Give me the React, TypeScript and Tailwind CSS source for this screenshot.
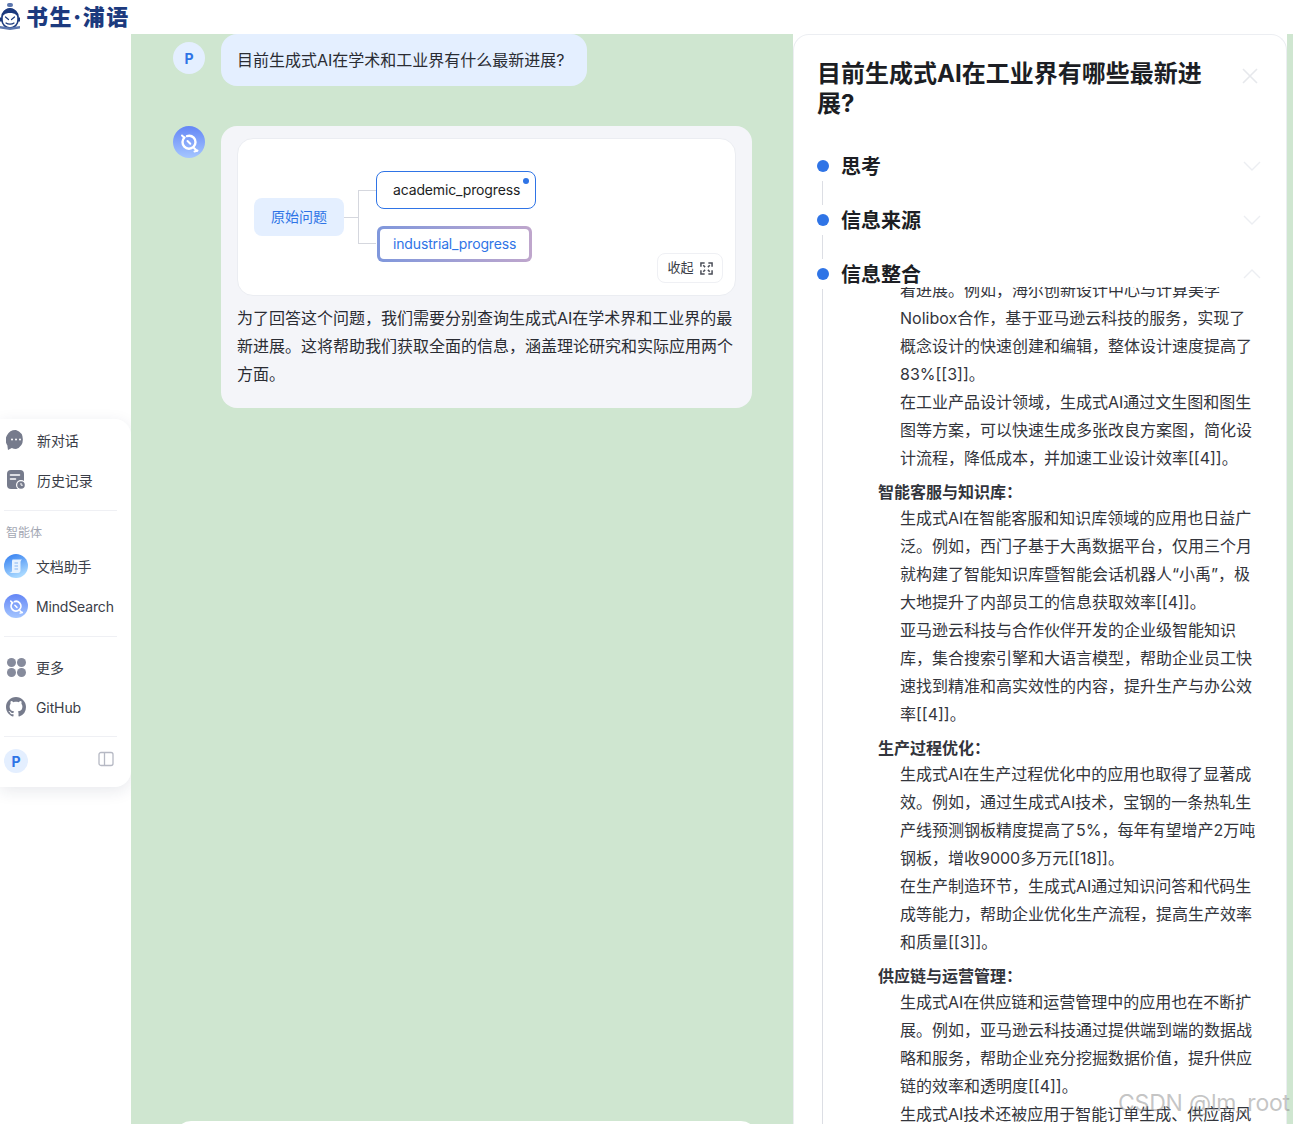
import React from "react";

const font = { fontFamily: '"Inter","Noto Sans CJK SC",sans-serif' };

function Mascot() {
  return (
    <svg width="22" height="30" viewBox="0 0 22 30" fill="none">
      <rect x="8" y="1" width="6" height="4" rx="2" fill="#5c76ae" />
      <path d="M3 15a8 8 0 0 1 16 0v3a8 8 0 0 1-16 0z" fill="#fff" stroke="#1c3a7e" strokeWidth="1.600" />
      <path d="M2.500 15C4 9 7 6 11 6s7 3 8.500 9c-2-1.500-3-4-8.500-4s-6.500 2.500-8.500 4z" fill="#1c3a7e" />
      <path d="M6.500 15l3 2.500M15.500 15l-3 2.500M7 21c2 1.500 6 1.500 8 0" stroke="#1c3a7e" strokeWidth="1.200" strokeLinecap="round" />
      <path d="M1 15.500h2v4H1zM19 15.500h2v4h-2z" fill="#1c3a7e" />
      <path d="M1 24l10 1.500L21 24v2.500l-10 1.500L1 26.500z" fill="#5c76ae" />
    </svg>
  );
}

function MindIcon({ size = 32, id }: { size?: number; id: string }) {
  return (
    <svg width={size} height={size} viewBox="0 0 32 32" fill="none">
      <defs>
        <linearGradient id={id} x1="0" y1="0" x2="0" y2="1">
          <stop offset="0" stopColor="#6486f6" />
          <stop offset="1" stopColor="#a5c6ff" />
        </linearGradient>
      </defs>
      <circle cx="16" cy="16" r="16" fill={`url(#${id})`} />
      <path d="M11.500 11.500a6.500 6.500 0 1 0 9.200 0.200 6.500 6.500 0 0 0-6.700-1.600" stroke="#fff" strokeWidth="2.400" strokeLinecap="round" />
      <path d="M9 9.500l2 2M14.500 15l2.800 2.800M21 22l3 3M21.500 25.500l3-1" stroke="#fff" strokeWidth="2" strokeLinecap="round" />
    </svg>
  );
}

function DocIcon() {
  return (
    <svg width="24" height="24" viewBox="0 0 24 24" fill="none">
      <defs>
        <linearGradient id="docg" x1="0" y1="0" x2="0.4" y2="1">
          <stop offset="0" stopColor="#2f7bf0" />
          <stop offset="1" stopColor="#a8d8ff" />
        </linearGradient>
      </defs>
      <circle cx="12" cy="12" r="12" fill="url(#docg)" />
      <path d="M8.500 5.500H18c-1 .5-1.500 1.500-1.500 3v8c0 1.500-1 2.500-2.500 2.500H5.500c1.500-.5 2.500-1 2.500-2.500V7z" fill="#e6f2ff" />
      <path d="M10.500 9h3.500M10.500 12h3.500M10.500 15h3.500" stroke="#86b6f2" strokeWidth="1" />
    </svg>
  );
}

function ChatIcon() {
  return (
    <svg width="20" height="20" viewBox="0 0 20 20">
      <path d="M10 0a10 10 0 0 1 0 19c-1.500 0-3-.3-4.200-.9L2 20c-.3-1.800-.5-3.300-.6-4.500A10 10 0 0 1 10 0z" fill="#767b8c" />
      <circle cx="6" cy="9.500" r="1" fill="#fff" />
      <circle cx="10" cy="9.500" r="1" fill="#fff" />
      <circle cx="14" cy="9.500" r="1" fill="#fff" />
    </svg>
  );
}

function HistoryIcon() {
  return (
    <svg width="20" height="20" viewBox="0 0 20 20">
      <rect x="1" y="0" width="17" height="19" rx="4" fill="#767b8c" />
      <path d="M4.500 5h9M4.500 9h5" stroke="#fff" strokeWidth="1.600" strokeLinecap="round" />
      <circle cx="15" cy="15" r="5" fill="#fff" />
      <circle cx="15" cy="15" r="3.800" fill="#767b8c" />
      <path d="M15 13v2.200h1.800" stroke="#fff" strokeWidth="1" fill="none" />
    </svg>
  );
}

function GridIcon() {
  return (
    <div className="grid grid-cols-2 gap-[1px] w-[19px]">
      <div className="w-[9px] h-[9px] rounded-full bg-[#868b9c]" />
      <div className="w-[9px] h-[9px] rounded-full bg-[#868b9c]" />
      <div className="w-[9px] h-[9px] rounded-full bg-[#868b9c]" />
      <div className="w-[9px] h-[9px] rounded-full bg-[#868b9c]" />
    </div>
  );
}

function GithubIcon() {
  return (
    <svg width="20" height="20" viewBox="0 0 16 16" fill="#767b8c">
      <path d="M8 0C3.580 0 0 3.580 0 8c0 3.540 2.290 6.530 5.470 7.590.4.070.55-.17.55-.38 0-.19-.01-.82-.01-1.490-2.010.37-2.530-.49-2.690-.94-.09-.23-.48-.94-.82-1.130-.28-.15-.68-.52-.01-.53.63-.01 1.080.58 1.230.82.72 1.210 1.870.87 2.330.66.070-.52.280-.87.510-1.070-1.780-.2-3.640-.89-3.640-3.950 0-.87.310-1.590.820-2.150-.080-.2-.360-1.020.080-2.120 0 0 .670-.210 2.200.820.640-.18 1.320-.270 2-.270s1.360.090 2 .270c1.530-1.040 2.200-.820 2.200-.820.440 1.100.160 1.920.080 2.120.510.560.820 1.270.820 2.150 0 3.070-1.870 3.750-3.650 3.950.290.250.540.730.540 1.480 0 1.070-.010 1.930-.010 2.200 0 .210.150.460.550.380A8.013 8.013 0 0 0 16 8c0-4.420-3.580-8-8-8z" />
    </svg>
  );
}

function SideRow({ icon, label, wide }: { icon: React.ReactNode; label: string; wide?: boolean }) {
  return (
    <div className="flex items-center h-[40px] pl-[6px]">
      <div className="w-[20px] flex justify-center">{icon}</div>
      <span className={wide ? "ml-[11px] text-[14px] tracking-[-0.1px] text-[#3a3d47]" : "ml-[10px] text-[14px] tracking-[-0.1px] text-[#3a3d47]"}>{label}</span>
    </div>
  );
}

function AgentRow({ icon, label }: { icon: React.ReactNode; label: string }) {
  return (
    <div className="flex items-center h-[40px] pl-[4px]">
      <div className="w-[24px] flex justify-center">{icon}</div>
      <span className="ml-[8px] text-[14px] tracking-[-0.15px] text-[#3a3d47]">{label}</span>
    </div>
  );
}

function Divider() {
  return <div className="mx-[4px] w-[113px] h-px bg-[#eff0f4]" />;
}

function Sidebar() {
  return (
    <div className="mt-[385px] w-[131px] h-[368px] bg-white rounded-r-[16px] shadow-[0_4px_16px_rgba(30,40,80,0.10)] pt-[1px]">
      <SideRow icon={<ChatIcon />} label="新对话" wide />
      <SideRow icon={<HistoryIcon />} label="历史记录" wide />
      <div className="h-[10px]" />
      <Divider />
      <div className="h-[21px] mt-[11px] pl-[6px] text-[12px] leading-[21px] text-[#a3a7b3]">智能体</div>
      <div className="h-[3px]" />
      <AgentRow icon={<DocIcon />} label="文档助手" />
      <AgentRow icon={<MindIcon size={24} id="mi2" />} label="MindSearch" />
      <div className="h-[10px]" />
      <Divider />
      <div className="h-[10px]" />
      <SideRow icon={<GridIcon />} label="更多" />
      <SideRow icon={<GithubIcon />} label="GitHub" />
      <div className="h-[9px]" />
      <Divider />
      <div className="flex items-center justify-between pl-[4px] pr-[17px] mt-[12px]">
        <div className="w-[24px] h-[24px] rounded-full bg-[#e4efff] flex items-center justify-center text-[14px] font-bold text-[#2f74e6]">P</div>
        <svg className="-mt-[4px]" width="16" height="16" viewBox="0 0 16 16" fill="none" stroke="#b6b9c4" strokeWidth="1.300">
          <rect x="1" y="1.500" width="14" height="13" rx="2" />
          <path d="M6.500 1.500v13" />
        </svg>
      </div>
    </div>
  );
}

function Graph() {
  return (
    <div className="h-[158px] rounded-[16px] bg-white border border-[#ebedf2] flex items-center pl-[16px] relative">
      <div className="w-[90px] h-[38px] pb-[2px] rounded-[8px] bg-[#e4efff] text-[14px] text-[#2f74e6] flex items-center justify-center">原始问题</div>
      <div className="w-[14px] h-px bg-[#d5d7de]" />
      <div className="w-[18px] h-[54px] border border-r-0 border-[#d5d7de]" />
      <div className="flex flex-col gap-[17px] -mt-[1px]">
        <div className="relative w-[160px] h-[38px] pb-[2px] rounded-[8px] bg-white border border-[#2f74e6] text-[14px] tracking-[-0.15px] text-[#1c1e24] flex items-center pl-[16px] whitespace-nowrap">
          academic_progress
          <div className="absolute top-[6px] right-[6px] w-[6px] h-[6px] rounded-full bg-[#2f74e6]" />
        </div>
        <div className="ml-[1px] w-[155px] h-[36px] rounded-[6px] p-[3px] bg-gradient-to-r from-[#7f97dc] to-[#bfa6cc]">
          <div className="w-full h-full pb-[2px] rounded-[4px] bg-white text-[14px] tracking-[-0.15px] text-[#2f74e6] flex items-center pl-[13px] whitespace-nowrap">industrial_progress</div>
        </div>
      </div>
      <div className="absolute right-[12px] bottom-[12px] w-[66px] h-[30px] rounded-[8px] bg-white border border-[#eff0f4] flex items-center justify-center gap-[6px] text-[13px] text-[#3a3d47]">
        收起
        <svg width="13" height="13" viewBox="0 0 14 14" fill="none" stroke="#4a4d57" strokeWidth="1.600">
          <path d="M1 5V1h4M9 1h4v4M13 9v4H9M5 13H1V9" />
          <path d="M3.500 3.500l2 2M10.500 3.500l-2 2M10.500 10.500l-2-2M3.500 10.500l2-2" />
        </svg>
      </div>
    </div>
  );
}

function Chat() {
  return (
    <div className="relative w-[662px] shrink-0 bg-[#cfe6d0] overflow-hidden">
      <div className="flex gap-[16px] pl-[42px] items-start">
        <div className="mt-[8px] w-[32px] h-[32px] rounded-full bg-[#e4efff] flex items-center justify-center text-[14px] font-bold text-[#2f74e6]">P</div>
        <div className="w-[366px] h-[52px] rounded-[16px] bg-[#e4efff] px-[16px] flex items-center text-[16px] text-[#2a2c33] whitespace-nowrap">目前生成式AI在学术和工业界有什么最新进展?</div>
      </div>
      <div className="flex gap-[16px] pl-[42px] items-start mt-[40px]">
        <MindIcon id="mi1" />
        <div className="w-[531px] h-[282px] rounded-[16px] bg-[#f4f5f9] px-[16px] pt-[12px]">
          <Graph />
          <p className="mt-[8px] text-[16px] leading-[28px] text-[#2a2c33]">
            为了回答这个问题，我们需要分别查询生成式AI在学术界和工业界的最新进展。这将帮助我们获取全面的信息，涵盖理论研究和实际应用两个方面。
          </p>
        </div>
      </div>
      <div className="absolute left-[44px] bottom-[-40px] w-[582px] h-[43px] rounded-[16px] bg-white" />
    </div>
  );
}

function Chevron({ up }: { up?: boolean }) {
  return (
    <svg width="18" height="10" viewBox="0 0 18 10" fill="none" stroke="#eceef2" strokeWidth="1.400">
      <path d={up ? "M1 9l8-8 8 8" : "M1 1l8 8 8-8"} />
    </svg>
  );
}

function Step({ label, up }: { label: string; up?: boolean }) {
  return (
    <div className="flex items-center h-[30px] pr-[25px]">
      <div className="w-[12px] h-[12px] rounded-full bg-[#2f74e6]" />
      <span className="ml-[12px] pt-[2px] text-[20px] font-bold text-[#1c1e24]">{label}</span>
      <div className="ml-auto"><Chevron up={up} /></div>
    </div>
  );
}

function Connector() {
  return <div className="h-[24px] w-px bg-[#dcdee4] ml-[5px]" />;
}

const blocks: { head?: string; lines: string[] }[] = [
  {
    lines: [
      "着进展。例如，海尔创新设计中心与计算美学",
      "Nolibox合作，基于亚马逊云科技的服务，实现了",
      "概念设计的快速创建和编辑，整体设计速度提高了",
      "83%[[3]]。",
      "在工业产品设计领域，生成式AI通过文生图和图生",
      "图等方案，可以快速生成多张改良方案图，简化设",
      "计流程，降低成本，并加速工业设计效率[[4]]。",
    ],
  },
  {
    head: "智能客服与知识库：",
    lines: [
      "生成式AI在智能客服和知识库领域的应用也日益广",
      "泛。例如，西门子基于大禹数据平台，仅用三个月",
      "就构建了智能知识库暨智能会话机器人“小禹”，极",
      "大地提升了内部员工的信息获取效率[[4]]。",
      "亚马逊云科技与合作伙伴开发的企业级智能知识",
      "库，集合搜索引擎和大语言模型，帮助企业员工快",
      "速找到精准和高实效性的内容，提升生产与办公效",
      "率[[4]]。",
    ],
  },
  {
    head: "生产过程优化：",
    lines: [
      "生成式AI在生产过程优化中的应用也取得了显著成",
      "效。例如，通过生成式AI技术，宝钢的一条热轧生",
      "产线预测钢板精度提高了5%，每年有望增产2万吨",
      "钢板，增收9000多万元[[18]]。",
      "在生产制造环节，生成式AI通过知识问答和代码生",
      "成等能力，帮助企业优化生产流程，提高生产效率",
      "和质量[[3]]。",
    ],
  },
  {
    head: "供应链与运营管理：",
    lines: [
      "生成式AI在供应链和运营管理中的应用也在不断扩",
      "展。例如，亚马逊云科技通过提供端到端的数据战",
      "略和服务，帮助企业充分挖掘数据价值，提升供应",
      "链的效率和透明度[[4]]。",
      "生成式AI技术还被应用于智能订单生成、供应商风",
    ],
  },
];

function Panel() {
  return (
    <div className="w-[494px] shrink-0 h-[1090px] rounded-t-[16px] bg-white border-t border-x border-[#eceef2] overflow-hidden flex flex-col">
      <div className="pl-[23px] pr-[27px] pt-[24px] flex items-start justify-between shrink-0">
        <h1 className="w-[400px] text-[24px] leading-[30px] font-bold text-[#1c1e24]">目前生成式AI在工业界有哪些最新进展?</h1>
        <svg className="mt-[8px]" width="18" height="18" viewBox="0 0 18 18" stroke="#e6e8ec" strokeWidth="1.600">
          <path d="M2 2l14 14M16 2L2 16" />
        </svg>
      </div>
      <div className="pl-[23px] mt-[32px] shrink-0">
        <Step label="思考" />
        <Connector />
        <Step label="信息来源" />
        <Connector />
        <Step label="信息整合" up />
      </div>
      <div className="flex flex-1 min-h-0 pl-[28px]">
        <div className="w-px bg-[#dcdee4]" />
        <div className="flex-1 overflow-hidden ml-[55px] mt-[-2px] text-[16px] leading-[28px] text-[#33353c]">
          <div className="mt-[-11px]">
            {blocks.map((b, i) => (
              <div key={i}>
                {b.head && <div className="mt-[6px] mb-[-2px] font-bold text-[#33353c]">{b.head}</div>}
                {b.lines.map((l, j) => (
                  <div key={j} className="pl-[22px] whitespace-nowrap">{l}</div>
                ))}
              </div>
            ))}
          </div>
        </div>
      </div>
    </div>
  );
}

export default function App() {
  return (
    <div style={font} className="relative w-[1293px] h-[1124px] overflow-hidden bg-white flex flex-col">
      <header className="h-[34px] shrink-0 flex items-center gap-[5px] bg-white -ml-[1px]">
        <Mascot />
        <span className="text-[22px] leading-[30px] font-black tracking-[1.5px] text-[#1c3a7e] whitespace-nowrap">书生·浦语</span>
      </header>
      <div className="flex flex-1 min-h-0">
        <div className="w-[131px] shrink-0 bg-white">
          <Sidebar />
        </div>
        <Chat />
        <Panel />
        <div className="flex-1 bg-[#cfe6d0]" />
      </div>
      <div className="absolute left-[1118px] top-[1088px] text-[23px] leading-[30px] tracking-[-0.2px] text-[#8c8c8c]/50 whitespace-nowrap">CSDN @lm_root</div>
    </div>
  );
}
